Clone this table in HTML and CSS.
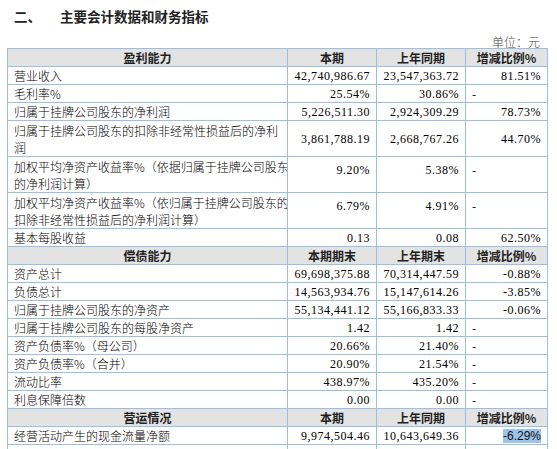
FILE: index.html
```html
<html lang="zh-CN">

<head>
    <meta charset="UTF-8">
    <meta name="viewport" content="width=device-width, initial-scale=1.0">
    <title>主要会计数据和财务指标</title>
    <link rel="stylesheet" href="styles.css">
</head>

<body>

    <div class="page">
        <h1 class="heading"><span class="num">二、</span>主要会计数据和财务指标</h1>
        <p class="unit">单位：元</p>

        <table class="report">
            <colgroup>
                <col class="c-label">
                <col class="c-val">
                <col class="c-val">
                <col class="c-rate">
            </colgroup>

            <tr class="head">
                <td>盈利能力</td>
                <td>本期</td>
                <td>上年同期</td>
                <td>增减比例%</td>
            </tr>
            <tr>
                <td class="label">营业收入</td>
                <td class="n">42,740,986.67</td>
                <td class="n">23,547,363.72</td>
                <td class="n">81.51%</td>
            </tr>
            <tr>
                <td class="label">毛利率%</td>
                <td class="n">25.54%</td>
                <td class="n">30.86%</td>
                <td class="dash">-</td>
            </tr>
            <tr>
                <td class="label">归属于挂牌公司股东的净利润</td>
                <td class="n">5,226,511.30</td>
                <td class="n">2,924,309.29</td>
                <td class="n">78.73%</td>
            </tr>
            <tr class="tall">
                <td class="label">归属于挂牌公司股东的扣除非经常性损益后的净利<br>润</td>
                <td class="n">3,861,788.19</td>
                <td class="n">2,668,767.26</td>
                <td class="n">44.70%</td>
            </tr>
            <tr class="tall top">
                <td class="label">加权平均净资产收益率%（依据归属于挂牌公司股东<br>的净利润计算）</td>
                <td class="n">9.20%</td>
                <td class="n">5.38%</td>
                <td class="dash">-</td>
            </tr>
            <tr class="tall top">
                <td class="label">加权平均净资产收益率%（依归属于挂牌公司股东的<br>扣除非经常性损益后的净利润计算）</td>
                <td class="n">6.79%</td>
                <td class="n">4.91%</td>
                <td class="dash">-</td>
            </tr>
            <tr>
                <td class="label">基本每股收益</td>
                <td class="n">0.13</td>
                <td class="n">0.08</td>
                <td class="n">62.50%</td>
            </tr>

            <tr class="head">
                <td>偿债能力</td>
                <td>本期期末</td>
                <td>上年期末</td>
                <td>增减比例%</td>
            </tr>
            <tr>
                <td class="label">资产总计</td>
                <td class="n">69,698,375.88</td>
                <td class="n">70,314,447.59</td>
                <td class="n">-0.88%</td>
            </tr>
            <tr>
                <td class="label">负债总计</td>
                <td class="n">14,563,934.76</td>
                <td class="n">15,147,614.26</td>
                <td class="n">-3.85%</td>
            </tr>
            <tr>
                <td class="label">归属于挂牌公司股东的净资产</td>
                <td class="n">55,134,441.12</td>
                <td class="n">55,166,833.33</td>
                <td class="n">-0.06%</td>
            </tr>
            <tr>
                <td class="label">归属于挂牌公司股东的每股净资产</td>
                <td class="n">1.42</td>
                <td class="n">1.42</td>
                <td class="dash">-</td>
            </tr>
            <tr>
                <td class="label">资产负债率%（母公司）</td>
                <td class="n">20.66%</td>
                <td class="n">21.40%</td>
                <td class="dash">-</td>
            </tr>
            <tr>
                <td class="label">资产负债率%（合并）</td>
                <td class="n">20.90%</td>
                <td class="n">21.54%</td>
                <td class="dash">-</td>
            </tr>
            <tr>
                <td class="label">流动比率</td>
                <td class="n">438.97%</td>
                <td class="n">435.20%</td>
                <td class="dash">-</td>
            </tr>
            <tr>
                <td class="label">利息保障倍数</td>
                <td class="n">0.00</td>
                <td class="n">0.00</td>
                <td class="dash">-</td>
            </tr>

            <tr class="head">
                <td>营运情况</td>
                <td>本期</td>
                <td>上年同期</td>
                <td>增减比例%</td>
            </tr>
            <tr>
                <td class="label">经营活动产生的现金流量净额</td>
                <td class="n">9,974,504.46</td>
                <td class="n">10,643,649.36</td>
                <td class="n"><span class="picked">-6.29%</span></td>
            </tr>
            <tr>
                <td class="label"></td>
                <td class="n"></td>
                <td class="n"></td>
                <td class="n"></td>
            </tr>
        </table>
    </div>

</body>

</html>
```

FILE: styles.css
```css
html, body {
    margin: 0;
    overflow: hidden;
    background: white;
}

.page {
    padding: 0 10px 0 7px;
    color: #2b2b2b;
    font-family: "Noto Sans CJK SC", sans-serif;
}

.heading {
    margin: 0;
    padding: 7px 0 0 7px;
    height: 18px;
    font-size: 13.5px;
    line-height: 18px;
    font-weight: bold;
    color: #222;
}
.heading .num {
    display: inline-block;
    width: 46px;
}

.unit {
    margin: 0;
    padding: 11px 7px 0 0;
    height: 12px;
    text-align: right;
    font-size: 12px;
    line-height: 12px;
    font-weight: 300;
    color: #444;
}

.report {
    border-collapse: collapse;
    table-layout: fixed;
    width: 541px;
    font-size: 12px;
}
.c-label { width: 280px; }
.c-val { width: 89px; }
.c-rate { width: 82px; }

.report td {
    border: 1px solid #97bfe7;
    height: 18px;
    padding: 0 6px;
    line-height: 14px;
    white-space: nowrap;
    overflow: hidden;
}

.head td {
    background: #e3e3e3;
    text-align: center;
    font-weight: bold;
    color: #1e1e1e;
}

.report .label {
    text-align: left;
    padding-right: 0;
    font-weight: 300;
}

.n {
    text-align: right;
    font-family: "Liberation Serif", serif;
    letter-spacing: 0.5px;
}

.dash {
    text-align: left;
}

.tall td {
    height: 35px;
}
.report .tall .label {
    vertical-align: top;
    padding-top: 1px;
    line-height: 17px;
}
.top .n, .top .dash {
    vertical-align: top;
    padding-top: 6px;
}

.picked {
    background: #9cc3ea;
    font-family: "Liberation Sans", sans-serif;
    letter-spacing: 0;
    color: #111;
}
```
